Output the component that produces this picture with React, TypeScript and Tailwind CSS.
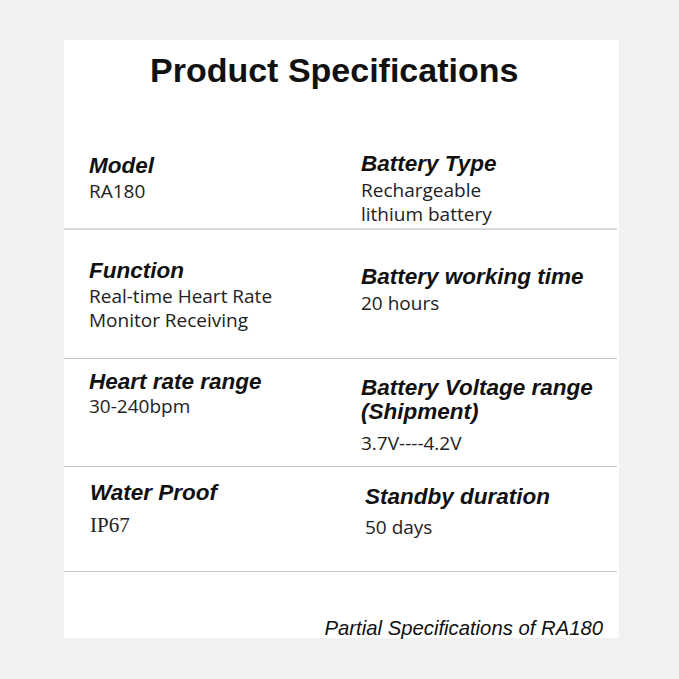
const label = "font-['Liberation_Sans',Arial,sans-serif] font-bold italic text-[22.5px] leading-[24px] text-[#111]";
const value = "font-['Open_Sans',sans-serif] text-[19px] leading-[24px] text-[#222]";

type Cell = { title: string[]; lines: string[]; pt: number; gap: number; serif?: boolean };

function SpecCell({ c }: { c: Cell }) {
  return (
    <div style={{ paddingTop: c.pt }}>
      {c.title.map((t) => (
        <div key={t} className={label}>{t}</div>
      ))}
      <div style={{ marginTop: c.gap }}>
        {c.lines.map((l) => (
          <div
            key={l}
            className={c.serif ? "font-['Liberation_Serif',serif] text-[21px] leading-[24px] text-[#222]" : value}
          >
            {l}
          </div>
        ))}
      </div>
    </div>
  );
}

const rows: { h: number; line: string; left: Cell; right: Cell; rightPl: number; leftPl: number }[] = [
  {
    h: 116,
    line: "h-[2px] bg-[#dadada]",
    leftPl: 25,
    rightPl: 297,
    left: { title: ["Model"], lines: ["RA180"], pt: 42, gap: 1 },
    right: { title: ["Battery Type"], lines: ["Rechargeable", "lithium battery"], pt: 40, gap: 2 },
  },
  {
    h: 128,
    line: "h-px bg-[#c6c6c6]",
    leftPl: 25,
    rightPl: 297,
    left: { title: ["Function"], lines: ["Real-time Heart Rate", "Monitor Receiving"], pt: 29, gap: 1 },
    right: { title: ["Battery working time"], lines: ["20 hours"], pt: 35, gap: 2 },
  },
  {
    h: 107,
    line: "h-px bg-[#c6c6c6]",
    leftPl: 25,
    rightPl: 297,
    left: { title: ["Heart rate range"], lines: ["30-240bpm"], pt: 11, gap: 0 },
    right: { title: ["Battery Voltage range", "(Shipment)"], lines: ["3.7V----4.2V"], pt: 17, gap: 7 },
  },
  {
    h: 104,
    line: "h-px bg-[#c6c6c6]",
    leftPl: 26,
    rightPl: 301,
    left: { title: ["Water Proof"], lines: ["IP67"], pt: 14, gap: 8, serif: true },
    right: { title: ["Standby duration"], lines: ["50 days"], pt: 18, gap: 6 },
  },
];

export default function App() {
  return (
    <div className="w-[679px] h-[679px] bg-[#f1f1f1] pt-[40px] pl-[64px]">
      <div className="w-[555px] h-[598px] bg-white flex flex-col">
        <div className="h-[72px] pt-[10px] pl-[86px] font-['Liberation_Sans',Arial,sans-serif] font-bold text-[34px] leading-[40px] text-[#111]">
          Product Specifications
        </div>
        {rows.map((r, i) => (
          <div key={i} className="flex flex-col">
            <div className="flex" style={{ height: r.h }}>
              <div className="w-[272px]" style={{ paddingLeft: r.leftPl }}>
                <SpecCell c={r.left} />
              </div>
              <div style={{ paddingLeft: r.rightPl - 272 }}>
                <SpecCell c={r.right} />
              </div>
            </div>
            <div className={"w-[553px] " + r.line} />
          </div>
        ))}
        <div className="flex-1 flex items-end justify-end pr-[16px]">
          <span className="font-['Liberation_Sans',Arial,sans-serif] italic text-[20.3px] leading-[20px] text-[#111]">
            Partial Specifications of RA180
          </span>
        </div>
      </div>
    </div>
  );
}
